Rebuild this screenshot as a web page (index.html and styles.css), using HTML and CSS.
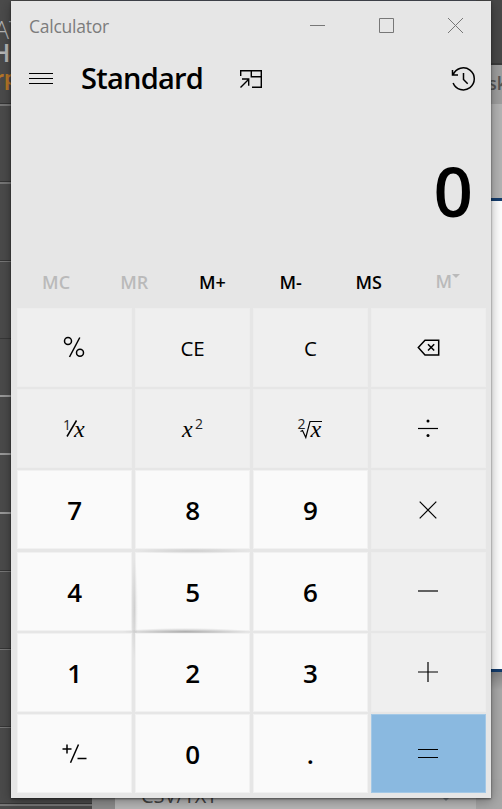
FILE: index.html
```html
<!DOCTYPE html>
<html lang="en">
<head>
<meta charset="utf-8">
<title>Calculator</title>
<link rel="stylesheet" href="styles.css">
</head>
<body>
<div class="desktop">
  <div class="topline"></div>
  <div class="sidebar">
    <span class="brand thin">AT</span><span class="brand strong">H</span><span class="brand orange">rp</span>
    <i class="rule r1"></i><i class="rule r2"></i><i class="rule r3"></i><i class="rule dark r4"></i><i class="rule light r5"></i><i class="rule light r6"></i><i class="rule light r7"></i><i class="rule r8"></i><i class="rule r9"></i><i class="rule r10"></i><i class="rule r11"></i>
  </div>
  <div class="behind-right"><div class="b-top"></div><div class="b-tab"><span>sk</span></div><div class="b-gray"></div><div class="b-page"></div><div class="b-low"></div></div>
  <div class="behind-bottom"><div class="c-gutter"></div><div class="c-list"><span class="c-text">CSV/TXT</span><span class="c-arrow"></span></div><div class="c-end"></div></div>

  <main class="calc">
    <header class="titlebar">
      <span class="title">Calculator</span>
      <svg class="controls" width="156" height="18" viewBox="0 0 156 18"><path d="M1 8.500h15M70.500 1.500h14v14h-14zM139 1l15 15M154 1l-15 15"/></svg>
    </header>
    <nav class="nav">
      <svg class="menu" width="24" height="12" viewBox="0 0 24 12"><path d="M0 1.500h24M0 6.500h24M0 11.500h24"/></svg>
      <h1>Standard</h1>
      <svg class="pin" width="24" height="20" viewBox="0 0 24 20"><path d="M1.700 7V1.700h20.600v16.600H13M12.300 1.700v6.100h10M1.500 18.500l8-8M3 10h6.700v6.800"/></svg>
      <svg class="history" width="26" height="26" viewBox="0 0 26 26"><path d="M2.100 8.700A11 11 0 1 1 2.100 17M1.500 4v5h5.500M12.500 7v6.500l4.200 4.200"/></svg>
    </nav>
    <output class="display">0</output>
    <div class="memory">
      <span class="off">MC</span><span class="off">MR</span><span>M+</span><span>M-</span><span>MS</span><span class="off list">M<i></i></span>
    </div>
    <div class="keys">
      <button class="fn"><svg viewBox="0 0 40 30"><path class="mid" d="M15.500 25L25.800 5.500"/><circle class="mid" cx="14" cy="9" r="3.500"/><circle class="mid" cx="26" cy="20.800" r="3.500"/></svg></button>
      <button class="fn">CE</button>
      <button class="fn">C</button>
      <button class="fn"><svg viewBox="0 0 40 30"><path class="mid" d="M10.300 15.500L17 8.200h13.700v14.700H17zM20 12.200l6.200 6.400M26.200 12.200L20 18.600"/></svg></button>

      <button class="fn"><svg viewBox="0 0 40 30"><text class="sup" x="9" y="15.500">1</text><path class="mid" d="M13 22.500l9.500-16"/><text class="var" x="20" y="22.500">x</text></svg></button>
      <button class="fn"><svg viewBox="0 0 40 30"><text class="var" x="10" y="22.500">x</text><text class="sup" x="23" y="15">2</text></svg></button>
      <button class="fn"><svg viewBox="0 0 40 30"><text class="sup" x="7.500" y="15">2</text><path d="M10.500 17.500l2-1 3.300 7 4.200-16h12"/><text class="var" x="20.500" y="22.500">x</text></svg></button>
      <button class="fn"><svg viewBox="0 0 40 30"><path d="M10 14.500h20"/><circle class="dot" cx="20" cy="7" r="1.500"/><circle class="dot" cx="20" cy="21.500" r="1.500"/></svg></button>

      <button>7</button><button>8</button><button>9</button>
      <button class="fn"><svg viewBox="0 0 40 30"><path d="M11.700 6.700l16.600 16.600M28.300 6.700L11.700 23.300"/></svg></button>

      <button>4</button>
      <button class="lit">5<i class="edge top"></i><i class="edge left"></i><i class="edge bottom"></i></button>
      <button>6</button>
      <button class="fn"><svg viewBox="0 0 40 30"><path d="M10 15h20"/></svg></button>

      <button>1</button><button>2</button><button>3</button>
      <button class="fn"><svg viewBox="0 0 40 30"><path d="M10 15h20M20 5v20"/></svg></button>

      <button><svg viewBox="0 0 40 30"><path class="mid" d="M8.500 10h9M13 5.500v9M16.500 23.800L24.500 5.500M23.500 19.500h9"/></svg></button>
      <button>0</button>
      <button>.</button>
      <button class="equals"><svg viewBox="0 0 40 30"><path d="M10 10.500h20M10 18.500h20"/></svg></button>
    </div>
  </main>
</div>
</body>
</html>
```
FILE: styles.css
```css
* { box-sizing: border-box; }
body { margin: 0; font-family: "Open Sans", "Noto Sans", sans-serif; color: #000; }
.desktop { position: relative; width: 502px; height: 809px; overflow: hidden; background: #484848; padding: 1px 11px 11px; }
.topline { position: absolute; left: 0; right: 0; top: 0; height: 3px; background: #484b54; }

.sidebar { position: absolute; left: 0; top: 0; width: 92px; height: 809px; background: #4b4b4b; }
.brand { position: absolute; line-height: 1; white-space: nowrap; }
.thin { left: -6px; top: 17px; font-size: 25px; font-weight: 300; color: #b5b5b5; }
.strong { left: -9px; top: 39px; font-size: 26px; font-weight: 600; color: #b8b8b8; }
.orange { left: -5px; top: 68px; font-size: 20px; font-weight: 700; color: #b87829; }
.rule { position: absolute; left: 0; width: 100%; height: 2px; background: #777; border-top: 1px solid #363636; }
.rule.dark { background: #383838; border: 0; height: 1px; }
.rule.light { background: #999; border: 0; }
.r1 { top: 103px; height: 3px; }
.r2 { top: 181px; height: 3px; }
.r3 { top: 260px; }
.r4 { top: 338px; }
.r5 { top: 395px; }
.r6 { top: 453px; }
.r7 { top: 512px; }
.r8 { top: 570px; }
.r9 { top: 648px; }
.r10 { top: 726px; }
.r11 { top: 803px; height: 3px; }

.behind-right { position: absolute; right: 0; top: 0; width: 26px; height: 809px; display: flex; flex-direction: column; }
.b-top { height: 65px; background: #484848; border-bottom: 2px solid #3b3b3b; }
.b-tab { height: 39px; background: #9f9f9f; padding-left: 12px; font-size: 18px; font-weight: 600; line-height: 37px; color: #555; }
.b-gray { height: 94px; background: #b4b4b4; }
.b-page { height: 474px; background: #fff; border: solid #143d6d; border-width: 3px 0; }
.b-low { flex: 1; background: linear-gradient(#858585, #a9a9a9 18px, #a9a9a9); }

.behind-bottom { position: absolute; left: 92px; bottom: 0; width: 410px; height: 30px; display: flex; }
.c-gutter { width: 23px; background: #8e8e8e; }
.c-list { position: relative; width: 361px; background: #b9b9b9; }
.c-end { flex: 1; background: #a8a8a8; }
.c-text { position: absolute; left: 26px; bottom: 0; font-size: 20px; line-height: 26px; color: #444; }
.c-arrow { position: absolute; left: 327px; top: 18px; border: solid transparent; border-width: 4px 4px 0; border-top-color: #7d858c; }

.calc { position: relative; width: 480px; height: 797px; background: #e6e6e6; display: flex; flex-direction: column; box-shadow: 0 1px 2px rgba(0,0,0,.5), 0 3px 12px rgba(0,0,0,.35); }
.titlebar { height: 50px; display: flex; align-items: center; justify-content: space-between; padding: 0 26px 0 18px; }
.title { margin-top: -1px; font-size: 17.500px; color: #7c7c7c; letter-spacing: -.25px; }
svg { display: block; overflow: visible; fill: none; stroke: #000; stroke-width: 1.200; }
.controls { stroke: #777; stroke-width: 1; }
.nav { height: 56px; display: flex; align-items: center; padding: 0 14px 0 18px; }
.menu { margin-top: -2px; stroke-width: 1; }
h1 { margin: -2px 0 0 28px; width: 158px; font-size: 29px; font-weight: 600; line-height: 40px; letter-spacing: -.75px; }
.pin { stroke-width: 1.400; }
.history { margin-left: auto; stroke-width: 1.500; }
.display { height: 150px; padding: 35px 18px 0 0; text-align: right; font-size: 69px; font-weight: 600; line-height: 96px; }
.memory { height: 51px; padding: 0 5px 2px 6px; display: grid; grid-template-columns: repeat(6, 1fr); align-items: center; text-align: center; font-size: 18px; font-weight: 600; line-height: 26px; }
.off { color: #bababa; }
.list { display: flex; justify-content: center; padding: 0 0 2px 2px; }
.list i { margin-top: 6px; border: solid transparent; border-width: 4px 4px 0; border-top-color: #bababa; height: 0; }

.keys { width: 469px; height: 485px; margin-left: 6px; display: grid; grid-template-columns: repeat(4, 1fr); grid-template-rows: repeat(6, 1fr); gap: 2.400px; }
button { position: relative; display: flex; align-items: center; justify-content: center; min-width: 0; margin: 0; padding: 1px 0 0; border: 1px solid #f1f1f1; background: #fafafa; color: #000; font: 600 26px "Open Sans", sans-serif; }
button svg { width: 40px; height: 30px; margin: -1px 1px 0 0; }
.fn { background: #efefef; border-color: #ededed; font-size: 20.500px; font-weight: 400; }
.equals { background: #8ab9e0; border-color: #a3c8e6; }
.mid { stroke-width: 1.500; }
.dot { fill: #000; stroke: none; }
.sup { fill: #222; stroke: none; font: 400 14px "Open Sans", sans-serif; }
.var { fill: #000; stroke: none; font: italic 24px "Liberation Serif", serif; }
.edge { position: absolute; }
.top { left: 0; right: 0; top: -5px; height: 6px; background: radial-gradient(ellipse closest-side, rgba(0,0,0,.1), transparent); }
.left { left: -5px; top: 4px; width: 7px; height: 104px; background: radial-gradient(ellipse closest-side, rgba(0,0,0,.1), transparent); }
.bottom { left: -14px; right: 0; bottom: -5px; height: 7px; background: radial-gradient(ellipse closest-side, rgba(0,0,0,.24), transparent); }
```
